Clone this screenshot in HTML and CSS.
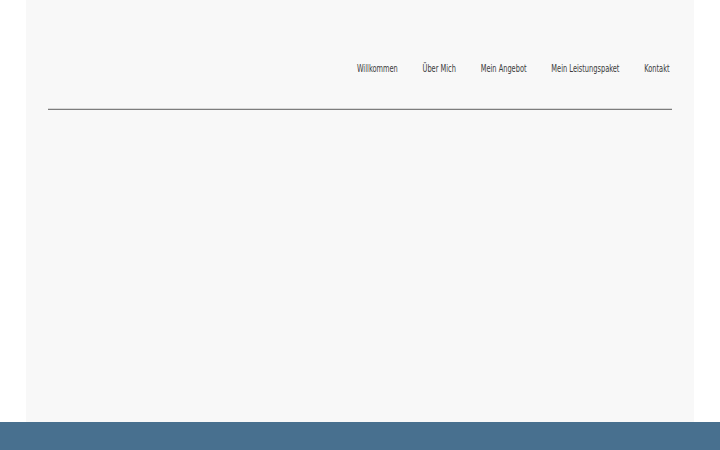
FILE: index.html
```html
<!DOCTYPE html>
<html lang="de">
<head>
<meta charset="utf-8">
<title>Willkommen</title>
<link rel="stylesheet" href="styles.css">
</head>
<body>
<div class="page">
  <div class="panel">
    <header class="header">
      <nav class="nav">
        <div class="nav-list">
          <a class="nav-link" href="#">Willkommen</a>
          <a class="nav-link" href="#">Über Mich</a>
          <a class="nav-link" href="#">Mein Angebot</a>
          <a class="nav-link" href="#">Mein Leistungspaket</a>
          <a class="nav-link" href="#">Kontakt</a>
        </div>
      </nav>
      <div class="rule"></div>
    </header>
    <main class="content"></main>
  </div>
  <footer class="footer"></footer>
</div>
</body>
</html>
```
FILE: styles.css
```css
html, body {
  margin: 0;
  padding: 0;
  background: #ffffff;
}
.page {
  display: flex;
  flex-direction: column;
  height: 450px;
  overflow: hidden;
}
.panel {
  margin: 0 26px;
  height: 422px;
  background: #f8f8f8;
  display: flex;
  flex-direction: column;
}
.header {
  display: flex;
  flex-direction: column;
}
.nav {
  display: flex;
  justify-content: flex-end;
  padding: 62px 24px 0 0;
}
.nav-list {
  display: flex;
  gap: 37px;
  transform: scaleX(0.67);
  transform-origin: right center;
  font-family: "DejaVu Sans", sans-serif;
  font-stretch: condensed;
  font-size: 11px;
  white-space: nowrap;
}
.nav-link {
  color: #3a3a3a;
  text-decoration: none;
  line-height: 14px;
}
.rule {
  margin: 33px 22px 0 22px;
  height: 1px;
  background: #7d7d7d;
  box-shadow: 0 -1px 0 #d8d8d8;
}
.content {
  flex: 1;
}
.footer {
  height: 28px;
  background: #48708f;
  flex-shrink: 0;
}
```
